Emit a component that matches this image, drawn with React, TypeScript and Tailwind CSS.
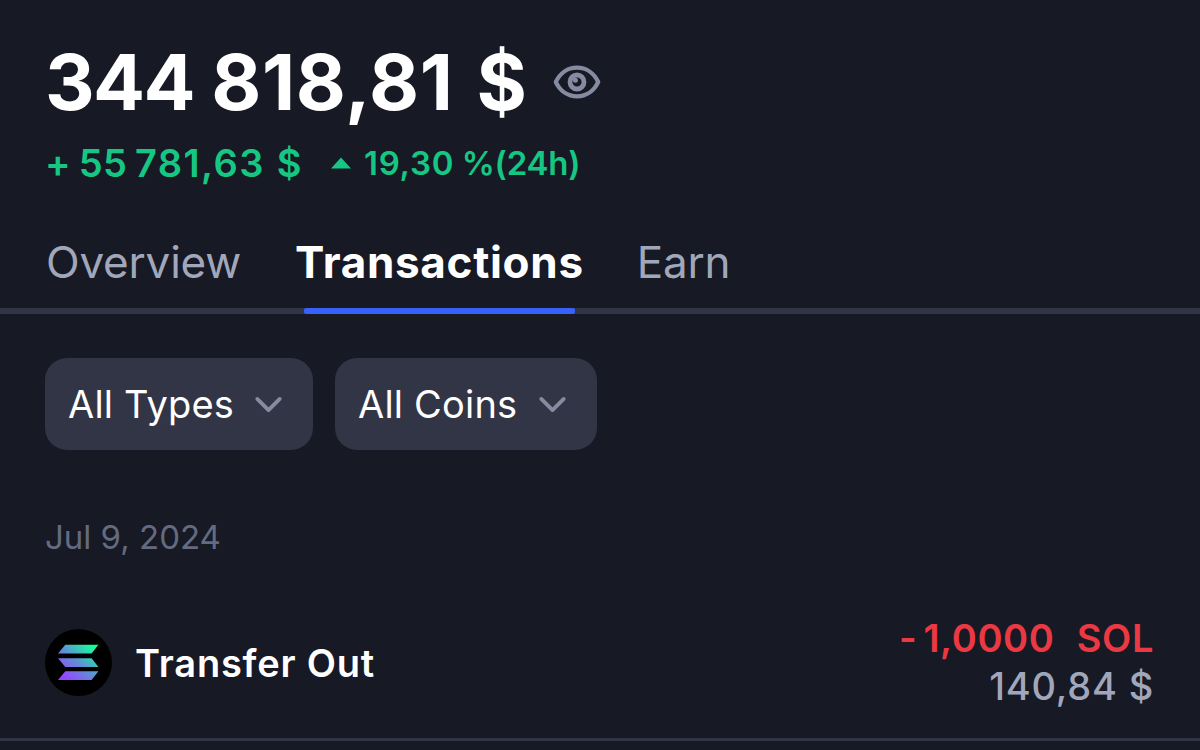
import { ChevronDown } from "lucide-react";

const tabs = [
  { name: "Overview", className: "mr-[54px] tracking-[-0.2px] text-[#a1a7bb]" },
  { name: "Transactions", className: "mr-[53px] font-bold tracking-[0.7px] text-white" },
  { name: "Earn", className: "tracking-[-0.2px] text-[#a1a7bb]" },
];

const filters = [
  { name: "All Types", className: "w-[268px]" },
  { name: "All Coins", className: "w-[262px]" },
];

function EyeIcon() {
  return (
    <svg width="48" height="36" viewBox="0 0 48 36" fill="none" stroke="#858ca2">
      <path
        d="M2.8 18C7 9 15 3.6 24 3.6S41 9 45.2 18C41 27 33 32.4 24 32.4S7 27 2.8 18Z"
        strokeWidth="4.2"
        strokeLinejoin="round"
      />
      <circle cx="24" cy="18" r="7" strokeWidth="4.8" />
      <circle cx="22.4" cy="16.2" r="2.5" fill="#858ca2" stroke="none" />
    </svg>
  );
}

function SolanaIcon() {
  return (
    <svg width="67" height="67" viewBox="0 0 67 67">
      <defs>
        <linearGradient id="sol" gradientUnits="userSpaceOnUse" x1="17" y1="53" x2="50" y2="14">
          <stop offset="0.1" stopColor="#9945ff" />
          <stop offset="0.5" stopColor="#5d91d6" />
          <stop offset="0.9" stopColor="#19fb9b" />
        </linearGradient>
      </defs>
      <circle cx="33.5" cy="33.5" r="33.5" fill="#000" />
      <g fill="url(#sol)">
        <path d="M20.3 15.8H53.4L46.6 24.6H13Z" />
        <path d="M13 29.2H46.6L53.4 38H20.3Z" />
        <path d="M20.3 42.3H53.4L46.6 51.1H13Z" />
      </g>
    </svg>
  );
}

export default function App() {
  return (
    <div className="flex h-[750px] w-[1200px] flex-col overflow-hidden bg-[#171924] font-['Inter',sans-serif] whitespace-pre">
      <header className="flex flex-col gap-[31px] pt-[52px] pl-[45px]">
        <div className="flex h-[60px] items-center">
          <h1 className="w-[508px] text-[77px] leading-none font-bold text-white">
            <span className="tracking-[-1.7px] [word-spacing:1px]">344 </span>
            <span className="tracking-[0.6px] [word-spacing:4px]">818,81 </span>$
          </h1>
          <EyeIcon />
        </div>
        <div className="flex h-10 items-center text-[#16c784]">
          <p className="w-[285px] text-[38px] leading-none font-[580]">
            <span className="tracking-[0.3px] [word-spacing:-2px]">+ 55 </span>
            <span className="tracking-[1.4px] [word-spacing:1px]">781,63 </span>$
          </p>
          <svg className="mr-3" width="22" height="12" viewBox="0 0 22 12" fill="#16c784">
            <path d="M11 0.5 21 11.5H1Z" />
          </svg>
          <p className="text-[33px] leading-none font-[560]">
            <span className="tracking-[0.7px] [word-spacing:-1.5px]">19,30 </span>
            <span className="tracking-[-0.2px]">%(24h)</span>
          </p>
        </div>
      </header>

      <nav className="mt-[33px] flex h-[98px] shrink-0 border-b-[6px] border-[#323546] pl-[46px]">
        {tabs.map((tab) => (
          <button key={tab.name} className={`relative text-[44px] leading-none ${tab.className}`}>
            {tab.name}
            {tab.name === "Transactions" && (
              <span className="absolute inset-x-[9px] -bottom-1.5 h-1.5 rounded-xs bg-[#3861fb]" />
            )}
          </button>
        ))}
      </nav>

      <div className="mt-11 flex gap-[22px] pl-[45px]">
        {filters.map((filter) => (
          <button
            key={filter.name}
            className={`flex h-[92px] items-center justify-between rounded-[22px] bg-[#323546] pr-[22px] pl-[23px] text-[38px] tracking-[0.2px] text-white ${filter.className}`}
          >
            {filter.name}
            <ChevronDown size={45} strokeWidth={2} color="#858ca2" />
          </button>
        ))}
      </div>

      <p className="mt-[67px] pl-[45px] text-[33px] leading-10 text-[#646b80]">Jul 9, 2024</p>

      <div className="mt-[29px] flex h-[155px] shrink-0 items-center border-b-[3px] border-[#323546] pr-[46px] pl-[45px]">
        <SolanaIcon />
        <p className="mt-0.5 ml-[23px] text-[38px] font-semibold tracking-[0.8px] text-white">
          Transfer Out
        </p>
        <div className="ml-auto text-right text-[38px] leading-[48px]">
          <p className="font-[560] tracking-[0.6px] text-[#ea3943] [word-spacing:1px]">
            <span className="[word-spacing:-4px]">- 1</span>,0000  SOL
          </p>
          <p className="font-medium tracking-[0.8px] text-[#a1a7bb]">140,84 $</p>
        </div>
      </div>
    </div>
  );
}
